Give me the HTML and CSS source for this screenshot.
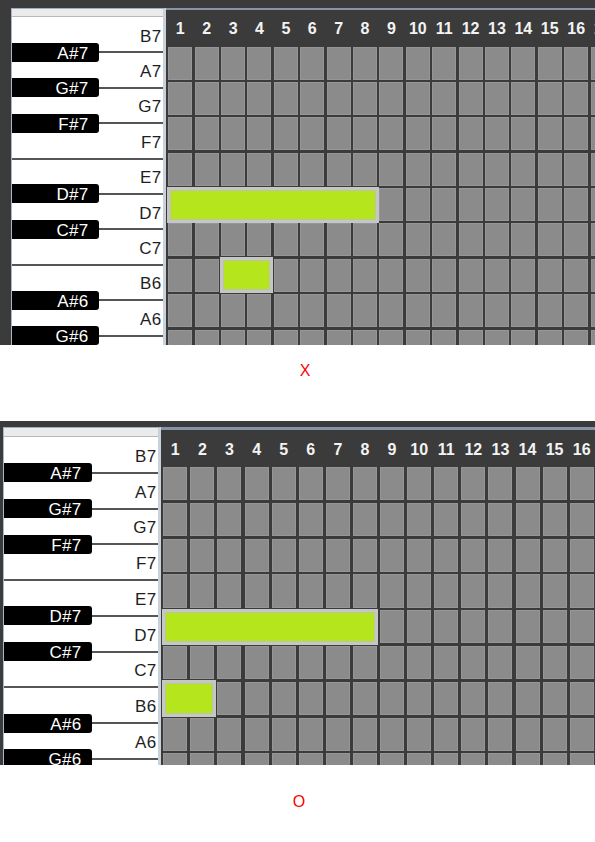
FILE: index.html
```html
<!DOCTYPE html>
<html lang="en">
<head>
<meta charset="utf-8">
<title>Piano roll</title>
<link rel="stylesheet" href="styles.css">
</head>
<body>
<div class="sheet">

  <section class="shot shot-x">
    <div class="piano">
      <div class="piano-cap"></div>
      <div class="wkey"><span class="wlabel">B7</span><span class="bkey">A#7</span></div>
      <div class="wkey"><span class="wlabel">A7</span><span class="bkey">G#7</span></div>
      <div class="wkey"><span class="wlabel">G7</span><span class="bkey">F#7</span></div>
      <div class="wkey"><span class="wlabel">F7</span></div>
      <div class="wkey"><span class="wlabel">E7</span><span class="bkey">D#7</span></div>
      <div class="wkey"><span class="wlabel">D7</span><span class="bkey">C#7</span></div>
      <div class="wkey"><span class="wlabel">C7</span></div>
      <div class="wkey"><span class="wlabel">B6</span><span class="bkey">A#6</span></div>
      <div class="wkey"><span class="wlabel">A6</span><span class="bkey">G#6</span></div>
      <div class="wkey"><span class="wlabel">G6</span></div>
    </div>
    <div class="roll">
      <div class="ruler"><span>1</span><span>2</span><span>3</span><span>4</span><span>5</span><span>6</span><span>7</span><span>8</span><span>9</span><span>10</span><span>11</span><span>12</span><span>13</span><span>14</span><span>15</span><span>16</span><span>17</span></div>
      <div class="grid">
        <i class="cell"></i><i class="cell"></i><i class="cell"></i><i class="cell"></i><i class="cell"></i><i class="cell"></i><i class="cell"></i><i class="cell"></i><i class="cell"></i><i class="cell"></i><i class="cell"></i><i class="cell"></i><i class="cell"></i><i class="cell"></i><i class="cell"></i><i class="cell"></i><i class="cell"></i>
        <i class="cell"></i><i class="cell"></i><i class="cell"></i><i class="cell"></i><i class="cell"></i><i class="cell"></i><i class="cell"></i><i class="cell"></i><i class="cell"></i><i class="cell"></i><i class="cell"></i><i class="cell"></i><i class="cell"></i><i class="cell"></i><i class="cell"></i><i class="cell"></i><i class="cell"></i>
        <i class="cell"></i><i class="cell"></i><i class="cell"></i><i class="cell"></i><i class="cell"></i><i class="cell"></i><i class="cell"></i><i class="cell"></i><i class="cell"></i><i class="cell"></i><i class="cell"></i><i class="cell"></i><i class="cell"></i><i class="cell"></i><i class="cell"></i><i class="cell"></i><i class="cell"></i>
        <i class="cell"></i><i class="cell"></i><i class="cell"></i><i class="cell"></i><i class="cell"></i><i class="cell"></i><i class="cell"></i><i class="cell"></i><i class="cell"></i><i class="cell"></i><i class="cell"></i><i class="cell"></i><i class="cell"></i><i class="cell"></i><i class="cell"></i><i class="cell"></i><i class="cell"></i>
        <i class="cell"></i><i class="cell"></i><i class="cell"></i><i class="cell"></i><i class="cell"></i><i class="cell"></i><i class="cell"></i><i class="cell"></i><i class="cell"></i><i class="cell"></i><i class="cell"></i><i class="cell"></i><i class="cell"></i><i class="cell"></i><i class="cell"></i><i class="cell"></i><i class="cell"></i>
        <i class="cell"></i><i class="cell"></i><i class="cell"></i><i class="cell"></i><i class="cell"></i><i class="cell"></i><i class="cell"></i><i class="cell"></i><i class="cell"></i><i class="cell"></i><i class="cell"></i><i class="cell"></i><i class="cell"></i><i class="cell"></i><i class="cell"></i><i class="cell"></i><i class="cell"></i>
        <i class="cell"></i><i class="cell"></i><i class="cell"></i><i class="cell"></i><i class="cell"></i><i class="cell"></i><i class="cell"></i><i class="cell"></i><i class="cell"></i><i class="cell"></i><i class="cell"></i><i class="cell"></i><i class="cell"></i><i class="cell"></i><i class="cell"></i><i class="cell"></i><i class="cell"></i>
        <i class="cell"></i><i class="cell"></i><i class="cell"></i><i class="cell"></i><i class="cell"></i><i class="cell"></i><i class="cell"></i><i class="cell"></i><i class="cell"></i><i class="cell"></i><i class="cell"></i><i class="cell"></i><i class="cell"></i><i class="cell"></i><i class="cell"></i><i class="cell"></i><i class="cell"></i>
        <i class="cell"></i><i class="cell"></i><i class="cell"></i><i class="cell"></i><i class="cell"></i><i class="cell"></i><i class="cell"></i><i class="cell"></i><i class="cell"></i><i class="cell"></i><i class="cell"></i><i class="cell"></i><i class="cell"></i><i class="cell"></i><i class="cell"></i><i class="cell"></i><i class="cell"></i>
        <div class="note" style="--c:0;--s:8;--r:4"></div>
        <div class="note" style="--c:2;--s:2;--r:6"></div>
      </div>
    </div>
  </section>
  <div class="caption caption-x">X</div>

  <section class="shot shot-o">
    <div class="piano">
      <div class="piano-cap"></div>
      <div class="wkey"><span class="wlabel">B7</span><span class="bkey">A#7</span></div>
      <div class="wkey"><span class="wlabel">A7</span><span class="bkey">G#7</span></div>
      <div class="wkey"><span class="wlabel">G7</span><span class="bkey">F#7</span></div>
      <div class="wkey"><span class="wlabel">F7</span></div>
      <div class="wkey"><span class="wlabel">E7</span><span class="bkey">D#7</span></div>
      <div class="wkey"><span class="wlabel">D7</span><span class="bkey">C#7</span></div>
      <div class="wkey"><span class="wlabel">C7</span></div>
      <div class="wkey"><span class="wlabel">B6</span><span class="bkey">A#6</span></div>
      <div class="wkey"><span class="wlabel">A6</span><span class="bkey">G#6</span></div>
      <div class="wkey"><span class="wlabel">G6</span></div>
    </div>
    <div class="roll">
      <div class="ruler"><span>1</span><span>2</span><span>3</span><span>4</span><span>5</span><span>6</span><span>7</span><span>8</span><span>9</span><span>10</span><span>11</span><span>12</span><span>13</span><span>14</span><span>15</span><span>16</span><span>17</span></div>
      <div class="grid">
        <i class="cell"></i><i class="cell"></i><i class="cell"></i><i class="cell"></i><i class="cell"></i><i class="cell"></i><i class="cell"></i><i class="cell"></i><i class="cell"></i><i class="cell"></i><i class="cell"></i><i class="cell"></i><i class="cell"></i><i class="cell"></i><i class="cell"></i><i class="cell"></i><i class="cell"></i>
        <i class="cell"></i><i class="cell"></i><i class="cell"></i><i class="cell"></i><i class="cell"></i><i class="cell"></i><i class="cell"></i><i class="cell"></i><i class="cell"></i><i class="cell"></i><i class="cell"></i><i class="cell"></i><i class="cell"></i><i class="cell"></i><i class="cell"></i><i class="cell"></i><i class="cell"></i>
        <i class="cell"></i><i class="cell"></i><i class="cell"></i><i class="cell"></i><i class="cell"></i><i class="cell"></i><i class="cell"></i><i class="cell"></i><i class="cell"></i><i class="cell"></i><i class="cell"></i><i class="cell"></i><i class="cell"></i><i class="cell"></i><i class="cell"></i><i class="cell"></i><i class="cell"></i>
        <i class="cell"></i><i class="cell"></i><i class="cell"></i><i class="cell"></i><i class="cell"></i><i class="cell"></i><i class="cell"></i><i class="cell"></i><i class="cell"></i><i class="cell"></i><i class="cell"></i><i class="cell"></i><i class="cell"></i><i class="cell"></i><i class="cell"></i><i class="cell"></i><i class="cell"></i>
        <i class="cell"></i><i class="cell"></i><i class="cell"></i><i class="cell"></i><i class="cell"></i><i class="cell"></i><i class="cell"></i><i class="cell"></i><i class="cell"></i><i class="cell"></i><i class="cell"></i><i class="cell"></i><i class="cell"></i><i class="cell"></i><i class="cell"></i><i class="cell"></i><i class="cell"></i>
        <i class="cell"></i><i class="cell"></i><i class="cell"></i><i class="cell"></i><i class="cell"></i><i class="cell"></i><i class="cell"></i><i class="cell"></i><i class="cell"></i><i class="cell"></i><i class="cell"></i><i class="cell"></i><i class="cell"></i><i class="cell"></i><i class="cell"></i><i class="cell"></i><i class="cell"></i>
        <i class="cell"></i><i class="cell"></i><i class="cell"></i><i class="cell"></i><i class="cell"></i><i class="cell"></i><i class="cell"></i><i class="cell"></i><i class="cell"></i><i class="cell"></i><i class="cell"></i><i class="cell"></i><i class="cell"></i><i class="cell"></i><i class="cell"></i><i class="cell"></i><i class="cell"></i>
        <i class="cell"></i><i class="cell"></i><i class="cell"></i><i class="cell"></i><i class="cell"></i><i class="cell"></i><i class="cell"></i><i class="cell"></i><i class="cell"></i><i class="cell"></i><i class="cell"></i><i class="cell"></i><i class="cell"></i><i class="cell"></i><i class="cell"></i><i class="cell"></i><i class="cell"></i>
        <i class="cell"></i><i class="cell"></i><i class="cell"></i><i class="cell"></i><i class="cell"></i><i class="cell"></i><i class="cell"></i><i class="cell"></i><i class="cell"></i><i class="cell"></i><i class="cell"></i><i class="cell"></i><i class="cell"></i><i class="cell"></i><i class="cell"></i><i class="cell"></i><i class="cell"></i>
        <div class="note" style="--c:0;--s:8;--r:4"></div>
        <div class="note" style="--c:0;--s:2;--r:6"></div>
      </div>
    </div>
  </section>
  <div class="caption caption-o">O</div>

</div>
</body>
</html>
```

FILE: styles.css
```css
* {
  box-sizing: border-box;
  margin: 0;
  padding: 0;
}

body {
  margin: 0;
  background: #ffffff;
  font-family: "Liberation Sans", Arial, sans-serif;
}

.sheet {
  width: 595px;
  display: flex;
  flex-direction: column;
}

/* ---------- one screenshot of the piano roll ---------- */
.shot {
  display: flex;
  align-items: stretch;
  overflow: hidden;
  background: #3b3b3b;
}

.shot-x {
  height: 345px;
  padding: 8px 0 0 11px;
  --piano-w: 151px;
  --bkey-w: 87px;
  --cap-h: 8px;
  --row: 35.4px;
  --line-top: 2px;
  --ruler-h: 36.5px;
  --colw: 24px;
  --colgap: 2.4px;
  --cellh: 33px;
  --rowgap: 2.4px;
}

.shot-o {
  height: 344px;
  padding: 6px 0 0 3px;
  --piano-w: 154px;
  --bkey-w: 88px;
  --cap-h: 9px;
  --row: 35.75px;
  --line-top: 3px;
  --ruler-h: 37px;
  --colw: 24px;
  --colgap: 3.1px;
  --cellh: 33.3px;
  --rowgap: 2.5px;
}

/* ---------- keyboard ---------- */
.piano {
  flex: 0 0 auto;
  width: calc(var(--piano-w) + 4px);
  background: #ffffff;
  border-top: 1px solid #9eafc0;
  border-left: 1px solid #aab7c4;
  border-right: 3px solid #c9d2db;
  display: flex;
  flex-direction: column;
}

.piano-cap {
  flex: 0 0 var(--cap-h);
  background: #ebebeb;
  border-bottom: 1px solid #b8b8b8;
}

.wkey {
  flex: 0 0 var(--row);
  position: relative;
  display: flex;
  align-items: center;
  justify-content: flex-end;
  padding: 3px 1.5px 0 0;
}

.wkey::after {
  content: "";
  position: absolute;
  left: 0;
  right: 0;
  bottom: -1px;
  height: 2px;
  background: #555555;
  z-index: 1;
}

.wlabel {
  font-size: 17px;
  line-height: 1;
  color: #1e1e1e;
  letter-spacing: 0.3px;
}

.bkey {
  position: absolute;
  left: 0;
  bottom: -9.5px;
  width: var(--bkey-w);
  height: 19px;
  background: #000000;
  border-radius: 0 3px 3px 0;
  color: #ffffff;
  font-size: 17px;
  line-height: 1;
  letter-spacing: 0.3px;
  display: flex;
  align-items: center;
  justify-content: flex-end;
  padding: 2px 10.5px 0 0;
  z-index: 2;
}

/* ---------- note grid ---------- */
.roll {
  flex: 1 1 auto;
  min-width: 0;
  overflow: hidden;
  border-top: var(--line-top) solid #8595a7;
  padding-left: 2.3px;
  display: flex;
  flex-direction: column;
}

.ruler {
  flex: 0 0 var(--ruler-h);
  display: grid;
  grid-template-columns: repeat(17, var(--colw));
  column-gap: var(--colgap);
  align-items: center;
  justify-items: center;
  padding-top: 2px;
  color: #f3f3f3;
  font-weight: bold;
  font-size: 16px;
  line-height: 1;
}

.ruler span {
  white-space: nowrap;
}

.grid {
  position: relative;
  display: grid;
  grid-template-columns: repeat(17, var(--colw));
  grid-auto-rows: var(--cellh);
  column-gap: var(--colgap);
  row-gap: var(--rowgap);
}

.cell {
  display: block;
  background: #8b8b8b;
  box-shadow: inset 0 0 0 1px #969696;
}

.note {
  position: absolute;
  left: calc(var(--c) * (var(--colw) + var(--colgap)) - 1.5px);
  top: calc(var(--r) * (var(--cellh) + var(--rowgap)) - 1.5px);
  width: calc(var(--s) * (var(--colw) + var(--colgap)) - var(--colgap) + 3px);
  height: calc(var(--cellh) + 3px);
  background: #b5e61d;
  border: 3px solid #c6c6c6;
  box-shadow: inset 0 0 0 1px #b9c79a;
}

/* ---------- captions ---------- */
.caption {
  font-family: "Liberation Sans", Arial, sans-serif;
  font-size: 16px;
  line-height: 16px;
  color: #ff0000;
  text-align: center;
}

.caption-x {
  height: 76px;
  padding: 18px 0 0 15px;
}

.caption-o {
  height: 77px;
  padding: 29px 0 0 3px;
}
```
